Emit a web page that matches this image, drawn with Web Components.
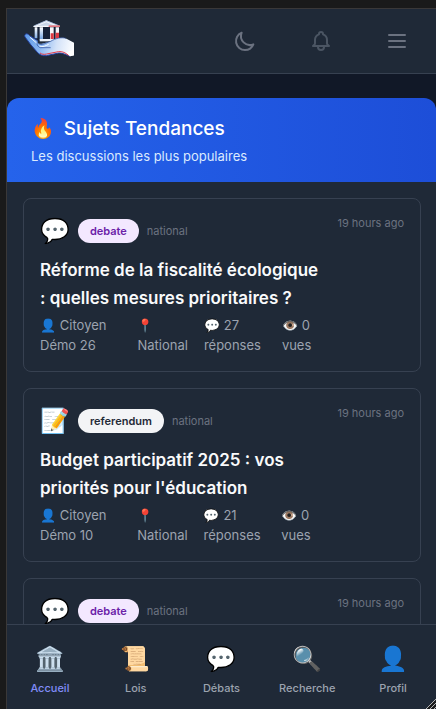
<!DOCTYPE html>
<html lang="fr">
<head>
<meta charset="utf-8">
<meta name="viewport" content="width=device-width, initial-scale=1">
<title>Sujets Tendances</title>
<style>
html, body { margin: 0; background: #1a1a1a; }
body { font-family: Inter, "Noto Color Emoji", sans-serif; color: #fff; }
</style>
</head>
<body>
<app-shell>
  <app-header slot="header"></app-header>
  <topic-banner icon="🔥" heading="Sujets Tendances">Les discussions les plus populaires</topic-banner>
  <topic-list>
    <topic-card icon="💬" kind="debate" scope="national" time="19 hours ago">
      <span slot="title">Réforme de la fiscalité écologique : quelles mesures prioritaires ?</span>
      <topic-meta slot="meta">👤 Citoyen Démo 26</topic-meta>
      <topic-meta slot="meta">📍 National</topic-meta>
      <topic-meta slot="meta">💬 27 réponses</topic-meta>
      <topic-meta slot="meta">👁️ 0 vues</topic-meta>
    </topic-card>
    <topic-card icon="📝" kind="referendum" scope="national" time="19 hours ago">
      <span slot="title">Budget participatif 2025 : vos priorités pour l'éducation</span>
      <topic-meta slot="meta">👤 Citoyen Démo 10</topic-meta>
      <topic-meta slot="meta">📍 National</topic-meta>
      <topic-meta slot="meta">💬 21 réponses</topic-meta>
      <topic-meta slot="meta">👁️ 0 vues</topic-meta>
    </topic-card>
    <topic-card icon="💬" kind="debate" scope="national" time="19 hours ago"></topic-card>
  </topic-list>
  <bottom-nav slot="nav">
    <nav-item icon="🏛️" active>Accueil</nav-item>
    <nav-item icon="📜">Lois</nav-item>
    <nav-item icon="💬">Débats</nav-item>
    <nav-item icon="🔍">Recherche</nav-item>
    <nav-item icon="👤">Profil</nav-item>
  </bottom-nav>
</app-shell>

<script>
function define(name, render) {
  customElements.define(name, class extends HTMLElement {
    constructor() {
      super();
      this.attachShadow({ mode: "open" });
    }
    connectedCallback() {
      const t = document.createElement("template");
      t.innerHTML = render(this);
      this.shadowRoot.replaceChildren(t.content.cloneNode(true));
    }
  });
}
const attr = (el, n) => el.getAttribute(n) || "";

define("app-shell", () => `
<style>
:host { display: block; box-sizing: border-box; height: 100vh; padding: 8px 0 0 6px; }
.frame { position: relative; box-sizing: border-box; height: 100%; display: flex; flex-direction: column;
  border: solid #3a3838; border-width: 1px 0 0 1px; background: #111827; }
main { flex: 1; min-height: 0; overflow: hidden; padding-top: 24px; }
.grip { position: absolute; right: 0; bottom: 0; display: block; }
</style>
<div class="frame">
  <slot name="header"></slot>
  <main><slot></slot></main>
  <slot name="nav"></slot>
  <svg class="grip" width="10" height="10" viewBox="0 0 10 10" fill="none" aria-hidden="true">
    <path d="M2 10L10 2M6 10L10 6" stroke="#1a1a1a" stroke-width="2"/>
    <path d="M0 10L10 0M4 10L10 4M8 10L10 8" stroke="#b4b4b4"/>
  </svg>
</div>`);

define("app-header", () => `
<style>
:host { display: block; }
header { display: flex; align-items: center; justify-content: space-between; box-sizing: border-box;
  height: 65px; padding: 0 16px; background: #1f2937; border-bottom: 1px solid #374151; }
a { display: block; padding-bottom: 4px; }
svg { display: block; }
.actions { display: flex; gap: 30px; }
button { display: flex; justify-content: center; width: 46px; padding: 8px 0; margin: 0; border: 0;
  background: none; color: #6b7280; }
button.dim { color: #4b5563; }
</style>
<header>
  <a href="#" aria-label="Accueil">
    <svg width="53" height="39" viewBox="70 59 159 117">
      <defs>
        <linearGradient id="h" x1="76" y1="110" x2="224" y2="140" gradientUnits="userSpaceOnUse">
          <stop offset="0" stop-color="#5f9be8"/><stop offset=".35" stop-color="#8db9f2"/>
          <stop offset=".65" stop-color="#d3e2f8"/><stop offset="1" stop-color="#fff"/>
        </linearGradient>
        <linearGradient id="c" x1="0" y1="0" x2="0" y2="1">
          <stop offset="0" stop-color="#fff"/><stop offset="1" stop-color="#6fa0df"/>
        </linearGradient>
      </defs>
      <path d="M101 77L140 60L181 77V80H101Z" fill="#f4f7fc"/>
      <path d="M104 76L140 61L178 76" fill="none" stroke="#8ba6cf" stroke-width="2"/>
      <path d="M114 76L140 66L166 76Z" fill="#c8d4e6"/>
      <path d="M147 75H181V80H147Z" fill="#e0737c"/>
      <path d="M105 81H178V120H105Z" fill="#172238"/>
      <path d="M105 81H113V114H105ZM120 81H130V118H120Z" fill="url(#c)"/>
      <path d="M151 81H162V116H151ZM168 81H178V115H168Z" fill="#f5f6fa"/>
      <path d="M153 99H162V116H153ZM168 97H178V115H168Z" fill="#dc3842"/>
      <path d="M120 116H176V123H120Z" fill="#edf3fb"/>
      <path d="M76 103C80 98 86 101 91 107L115 122C112 128 117 132 125 130L150 124C164 113 190 108 202 116L223 127V165L211 168C203 164 187 157 177 158L140 166C126 167 120 163 113 156L94 134L79 114C75 109 74 106 76 103Z" fill="url(#h)"/>
      <path d="M211 168C202 164 187 157 177 158L140 166C126 167 120 163 113 156L94 134L79 114C75 109 74 106 76 103C80 98 86 101 91 107L114 121" fill="none" stroke="#233f9d" stroke-width="3"/>
      <path d="M121 158C127 162 132 163 141 161L176 154C188 152 198 158 207 165" fill="none" stroke="#e23b4b" stroke-width="3"/>
      <path d="M114 122C109 130 113 139 122 142H153M119 132C131 135 143 125 153 123C167 114 185 110 199 114" fill="none" stroke="#264797" stroke-width="2"/>
      <path d="M91 111L111 128M119 137C130 141 138 137 147 132" fill="none" stroke="#f5faff" stroke-width="3"/>
      <path d="M199 156L223 148V165L211 168Z" fill="#fff"/>
    </svg>
  </a>
  <div class="actions">
    <button type="button" aria-label="Mode sombre"><svg width="24" height="24" viewBox="0 0 24 24" fill="none" stroke="currentColor" stroke-width="2" stroke-linecap="round" stroke-linejoin="round"><path d="M20.354 15.354A9 9 0 018.646 3.646 9.003 9.003 0 0012 21a9.003 9.003 0 008.354-5.646z"/></svg></button>
    <button type="button" class="dim" aria-label="Notifications"><svg width="24" height="24" viewBox="0 0 24 24" fill="none" stroke="currentColor" stroke-width="2" stroke-linecap="round" stroke-linejoin="round"><path d="M15 17h5l-1.405-1.405A2.032 2.032 0 0118 14.158V11a6.002 6.002 0 00-4-5.659V5a2 2 0 10-4 0v.341C7.67 6.165 6 8.388 6 11v3.159c0 .538-.214 1.055-.595 1.436L4 17h5m6 0v1a3 3 0 11-6 0v-1m6 0H9"/></svg></button>
    <button type="button" aria-label="Menu"><svg width="24" height="24" viewBox="0 0 24 24" fill="none" stroke="currentColor" stroke-width="2" stroke-linecap="round"><path d="M4 6h16M4 12h16M4 18h16"/></svg></button>
  </div>
</header>`);

define("topic-banner", el => `
<style>
:host { display: block; padding: 17px 24px 16px; border-radius: 12px 12px 0 0;
  background: linear-gradient(to right, #2563eb, #1d4ed8); }
h2 { display: flex; gap: 9px; margin: 0 0 3px; font-size: 19px; line-height: 28px; font-weight: 500; color: #fff; }
p { margin: 0; font-size: 13px; line-height: 20px; color: #dbeafe; }
</style>
<h2><span>${attr(el, "icon")}</span><span>${attr(el, "heading")}</span></h2>
<p><slot></slot></p>`);

define("topic-list", () => `
<style>
:host { display: flex; flex-direction: column; gap: 16px; padding: 16px 15px 16px 16px; background: #1f2937; }
</style>
<slot></slot>`);

define("topic-card", el => `
<style>
:host { display: block; }
article { display: flex; align-items: flex-start; gap: 16px; padding: 16px; border: 1px solid #374151; border-radius: 8px; }
.body { flex: 1; min-width: 0; }
.head { display: flex; align-items: center; gap: 8px; margin-bottom: 9px; }
.icon { font-size: 24px; line-height: 32px; }
.badge { padding: 4px 12px; border-radius: 12px; background: #f3f4f6; color: #1f2937;
  font-size: 11px; line-height: 16px; font-weight: 600; }
.badge.debate { background: #f3e8ff; color: #6b21a8; }
.scope, time { font-size: 11px; line-height: 16px; color: #6b7280; }
time { white-space: nowrap; }
h3 { margin: 0 0 3px; font-size: 17px; line-height: 28px; font-weight: 600; color: #f9fafb; }
.meta { display: flex; gap: 16px; }
</style>
<article>
  <div class="body">
    <div class="head"><span class="icon">${attr(el, "icon")}</span><span class="badge ${attr(el, "kind")}">${attr(el, "kind")}</span><span class="scope">${attr(el, "scope")}</span></div>
    <h3><slot name="title"></slot></h3>
    <div class="meta"><slot name="meta"></slot></div>
  </div>
  <time>${attr(el, "time")}</time>
</article>`);

define("topic-meta", () => `
<style>
:host { display: block; font-size: 13px; line-height: 20px; color: #9ca3af; }
</style>
<slot></slot>`);

define("bottom-nav", () => `
<style>
:host { display: block; }
nav { display: flex; background: #1f2937; border-top: 1px solid #374151; }
</style>
<nav><slot></slot></nav>`);

define("nav-item", el => `
<style>
:host { display: block; flex: 1; min-width: 0; color: #9ca3af; }
:host([active]) { color: #818cf8; }
a { display: flex; flex-direction: column; align-items: center; gap: 5px; padding: 18px 0 13px;
  color: inherit; text-decoration: none; }
.icon { font-size: 24px; line-height: 32px; }
.label { font-size: 11px; line-height: 16px; font-weight: 500; }
</style>
<a href="#"><span class="icon">${attr(el, "icon")}</span><span class="label"><slot></slot></span></a>`);
</script>
</body>
</html>
